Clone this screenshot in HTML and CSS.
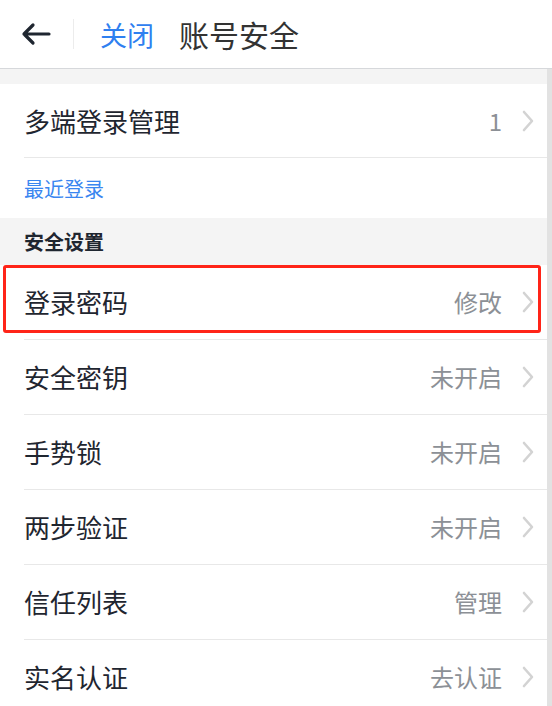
FILE: index.html
```html
<!DOCTYPE html>
<html>
<head>
    <meta charset="UTF-8">
    <title>账号安全</title>
    <link rel="stylesheet" href="styles.css">
</head>
<body>
    <div class="page">
        <div class="header">
            <span class="back">
                <svg width="30" height="24" viewBox="0 0 30 24"><path d="M28 12H3M12 3L3 12l9 9" fill="none" stroke="#1f2630" stroke-width="3.2" stroke-linecap="round" stroke-linejoin="round"/></svg>
            </span>
            <span class="divider"></span>
            <span class="close">关闭</span>
            <span class="title">账号安全</span>
        </div>
        <div class="body">
            <div class="gap"></div>
            <div class="row first">
                <span class="label">多端登录管理</span>
                <span class="value">1</span>
                <svg class="chevron" width="12" height="22" viewBox="0 0 12 22"><path d="M2 2l8 9-8 9" fill="none" stroke="#d3d3d3" stroke-width="2.6" stroke-linecap="round" stroke-linejoin="round"/></svg>
            </div>
            <div class="recent">最近登录</div>
            <div class="group-title">安全设置</div>
            <div class="row marked">
                <span class="label">登录密码</span>
                <span class="value">修改</span>
                <svg class="chevron" width="12" height="22" viewBox="0 0 12 22"><path d="M2 2l8 9-8 9" fill="none" stroke="#d3d3d3" stroke-width="2.6" stroke-linecap="round" stroke-linejoin="round"/></svg>
            </div>
            <div class="row">
                <span class="label">安全密钥</span>
                <span class="value">未开启</span>
                <svg class="chevron" width="12" height="22" viewBox="0 0 12 22"><path d="M2 2l8 9-8 9" fill="none" stroke="#d3d3d3" stroke-width="2.6" stroke-linecap="round" stroke-linejoin="round"/></svg>
            </div>
            <div class="row">
                <span class="label">手势锁</span>
                <span class="value">未开启</span>
                <svg class="chevron" width="12" height="22" viewBox="0 0 12 22"><path d="M2 2l8 9-8 9" fill="none" stroke="#d3d3d3" stroke-width="2.6" stroke-linecap="round" stroke-linejoin="round"/></svg>
            </div>
            <div class="row">
                <span class="label">两步验证</span>
                <span class="value">未开启</span>
                <svg class="chevron" width="12" height="22" viewBox="0 0 12 22"><path d="M2 2l8 9-8 9" fill="none" stroke="#d3d3d3" stroke-width="2.6" stroke-linecap="round" stroke-linejoin="round"/></svg>
            </div>
            <div class="row">
                <span class="label">信任列表</span>
                <span class="value">管理</span>
                <svg class="chevron" width="12" height="22" viewBox="0 0 12 22"><path d="M2 2l8 9-8 9" fill="none" stroke="#d3d3d3" stroke-width="2.6" stroke-linecap="round" stroke-linejoin="round"/></svg>
            </div>
            <div class="row">
                <span class="label">实名认证</span>
                <span class="value">去认证</span>
                <svg class="chevron" width="12" height="22" viewBox="0 0 12 22"><path d="M2 2l8 9-8 9" fill="none" stroke="#d3d3d3" stroke-width="2.6" stroke-linecap="round" stroke-linejoin="round"/></svg>
            </div>
        </div>
    </div>
</body>
</html>
```

FILE: styles.css
```css
body {
    margin: 0;
    padding: 0;
    font-family: "Noto Sans CJK SC", "Noto Sans", sans-serif;
    background-color: #fff;
    color: #1f2630;
    overflow: hidden;
    height: 706px;
}
.page {
    display: flex;
    flex-direction: column;
    height: 100%;
}
.header {
    display: flex;
    align-items: center;
    height: 68px;
    border-bottom: 1px solid #d6d8db;
    flex-shrink: 0;
}
.back {
    display: flex;
    margin-left: 21px;
    width: 30px;
    height: 24px;
}
.divider {
    width: 1px;
    height: 30px;
    background-color: #ececec;
    margin-left: 22px;
}
.close {
    margin-left: 26px;
    font-size: 27px;
    color: #2f80f0;
    line-height: 1;
}
.title {
    margin-left: 25px;
    font-size: 30px;
    color: #333;
    line-height: 1;
}
.body {
    flex: 1;
    border-right: 5px solid #e2e2e2;
}
.gap {
    height: 15px;
    background-color: #f4f4f4;
}
.row {
    position: relative;
    display: flex;
    align-items: center;
    height: 74px;
    margin-left: 24px;
    border-bottom: 1px solid #e8e8e8;
}
.row.first {
    height: 73px;
}
.row.marked::after {
    content: "";
    position: absolute;
    left: -21px;
    right: 6px;
    top: 0;
    bottom: 6px;
    border: 3px solid #ff2418;
    border-radius: 3px;
}
.label {
    flex: 1;
    font-size: 26px;
    line-height: 1;
}
.value {
    font-size: 24px;
    color: #8c9096;
    line-height: 1;
}
.chevron {
    display: block;
    margin-left: 20px;
    margin-right: 13px;
}
.recent {
    height: 60px;
    display: flex;
    align-items: center;
    padding-left: 24px;
    font-size: 20px;
    color: #3a86f0;
}
.group-title {
    height: 47px;
    display: flex;
    align-items: center;
    padding-left: 24px;
    background-color: #f4f4f4;
    font-size: 20px;
    font-weight: bold;
    color: #1f2630;
}
```
